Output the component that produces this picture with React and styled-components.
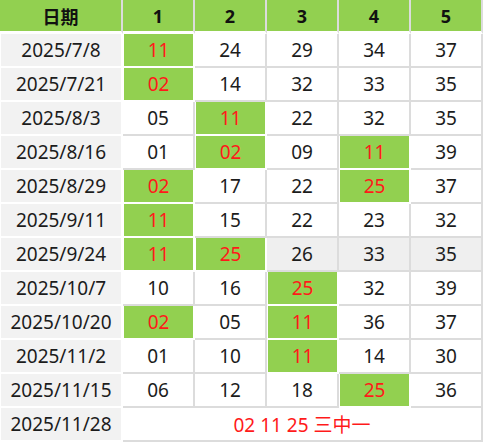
import React from 'react'
import styled, {createGlobalStyle} from 'styled-components'

const GlobalStyle = createGlobalStyle`
body{
    margin: 0;
    background: #fff;
    font-family: "Noto Sans", "Noto Sans CJK SC", sans-serif;
}
`

const rows = [
    ['2025/7/8', ['11', '24', '29', '34', '37']],
    ['2025/7/21', ['02', '14', '32', '33', '35']],
    ['2025/8/3', ['05', '11', '22', '32', '35']],
    ['2025/8/16', ['01', '02', '09', '11', '39']],
    ['2025/8/29', ['02', '17', '22', '25', '37']],
    ['2025/9/11', ['11', '15', '22', '23', '32']],
    ['2025/9/24', ['11', '25', '26', '33', '35'], true],
    ['2025/10/7', ['10', '16', '25', '32', '39']],
    ['2025/10/20', ['02', '05', '11', '36', '37']],
    ['2025/11/2', ['01', '10', '11', '14', '30']],
    ['2025/11/15', ['06', '12', '18', '25', '36']],
]

const hits = ['02', '11', '25']

const App = () => {
    return (
        <>
            <GlobalStyle />
            <Table>
                <Head>日期</Head>
                {[1, 2, 3, 4, 5].map(n => <Head key={n}>{n}</Head>)}
                {rows.map(([date, nums, grey]) => (
                    <React.Fragment key={date}>
                        <DateCell>{date}</DateCell>
                        {nums.map((num, i) => {
                            const hit = hits.includes(num)
                            return (
                                <NumCell key={i} $hit={hit} $grey={grey && !hit}>{num}</NumCell>
                            )
                        })}
                    </React.Fragment>
                ))}
                <DateCell>2025/11/28</DateCell>
                <Result>02 11 25 三中一</Result>
            </Table>
        </>
    )
}

const Table = styled.div`
display: grid;
grid-template-columns: 123px repeat(5, 72px);
grid-template-rows: repeat(13, 34px);
width: 483px;
`

const Cell = styled.div`
box-sizing: border-box;
display: flex;
align-items: center;
justify-content: center;
border-right: 2px solid #dcdcdc;
border-bottom: 2px solid #dcdcdc;
font-size: 19px;
color: #1c1c1c;
`

const Head = styled(Cell)`
background: #92d050;
font-size: 18px;
font-weight: bold;
color: #111;
border-bottom-color: #fff;
border-bottom-width: 3px;
`

const DateCell = styled(Cell)`
background: #f2f2f2;
border-color: #fff;
border-left: 1px solid #fff;
`

const NumCell = styled(Cell)`
background: ${p => p.$hit ? '#92d050' : p.$grey ? '#efefef' : '#fff'};
color: ${p => p.$hit ? '#ff1a1a' : '#1c1c1c'};
border-color: ${p => p.$hit ? '#fff' : '#dcdcdc'};
border-left: ${p => p.$hit ? '1px solid #fff' : 'none'};
`

const Result = styled(Cell)`
grid-column: span 5;
background: #fff;
color: #ff1a1a;
`

export default App
